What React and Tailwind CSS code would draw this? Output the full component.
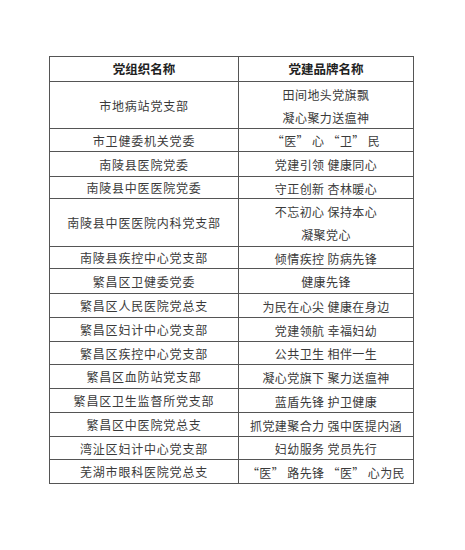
import React from "react";

const rows = [
  { org: "市地病站党支部", brand: ["田间地头党旗飘", "凝心聚力送瘟神"], h: "h-[47px]" },
  { org: "市卫健委机关党委", brand: ["“医” 心 “卫” 民"], h: "h-[23px]" },
  { org: "南陵县医院党委", brand: ["党建引领 健康同心"], h: "h-[25px]" },
  { org: "南陵县中医医院党委", brand: ["守正创新 杏林暖心"], h: "h-[22px]" },
  { org: "南陵县中医医院内科党支部", brand: ["不忘初心 保持本心", "凝聚党心"], h: "h-[48px]" },
  { org: "南陵县疾控中心党支部", brand: ["倾情疾控 防病先锋"], h: "h-[22px]" },
  { org: "繁昌区卫健委党委", brand: ["健康先锋"], h: "h-[25px]" },
  { org: "繁昌区人民医院党总支", brand: ["为民在心尖 健康在身边"], h: "h-[24px]" },
  { org: "繁昌区妇计中心党支部", brand: ["党建领航 幸福妇幼"], h: "h-[24px]" },
  { org: "繁昌区疾控中心党支部", brand: ["公共卫生 相伴一生"], h: "h-[23px]" },
  { org: "繁昌区血防站党支部", brand: ["凝心党旗下 聚力送瘟神"], h: "h-[24px]" },
  { org: "繁昌区卫生监督所党支部", brand: ["蓝盾先锋 护卫健康"], h: "h-[24px]" },
  { org: "繁昌区中医院党总支", brand: ["抓党建聚合力 强中医提内涵"], h: "h-[24px]" },
  { org: "湾沚区妇计中心党支部", brand: ["妇幼服务 党员先行"], h: "h-[23px]" },
  { org: "芜湖市眼科医院党总支", brand: ["“医” 路先锋 “医” 心为民"], h: "h-[24px]" },
];

export default function App() {
  return (
    <div
      className="w-[465px] h-[550px] bg-white pt-[56px] pl-[49px] text-[#3a3a3a]"
      style={{ fontFamily: '"Noto Sans CJK SC", "Noto Sans", sans-serif' }}
    >
      <div className="w-[365px] border border-[#555]">
        {/* header */}
        <div className="flex h-[24px] text-[12.5px] font-bold text-[#222]">
          <div className="w-[189px] border-r border-[#555] flex items-center justify-center">党组织名称</div>
          <div className="flex-1 flex items-center justify-center">党建品牌名称</div>
        </div>
        {rows.map((r, i) => (
          <div key={i} className={`flex border-t border-[#555] text-[12px] ${r.h}`}>
            <div className="w-[189px] border-r border-[#555] flex items-center justify-center tracking-[0.8px] pt-[1px]">
              {r.org}
            </div>
            <div className="flex-1 flex flex-col items-center justify-center tracking-[0.4px] leading-[23px] pt-[1px]">
              {r.brand.map((b, j) => (
                <div key={j} className="whitespace-pre">{b}</div>
              ))}
            </div>
          </div>
        ))}
      </div>
    </div>
  );
}
